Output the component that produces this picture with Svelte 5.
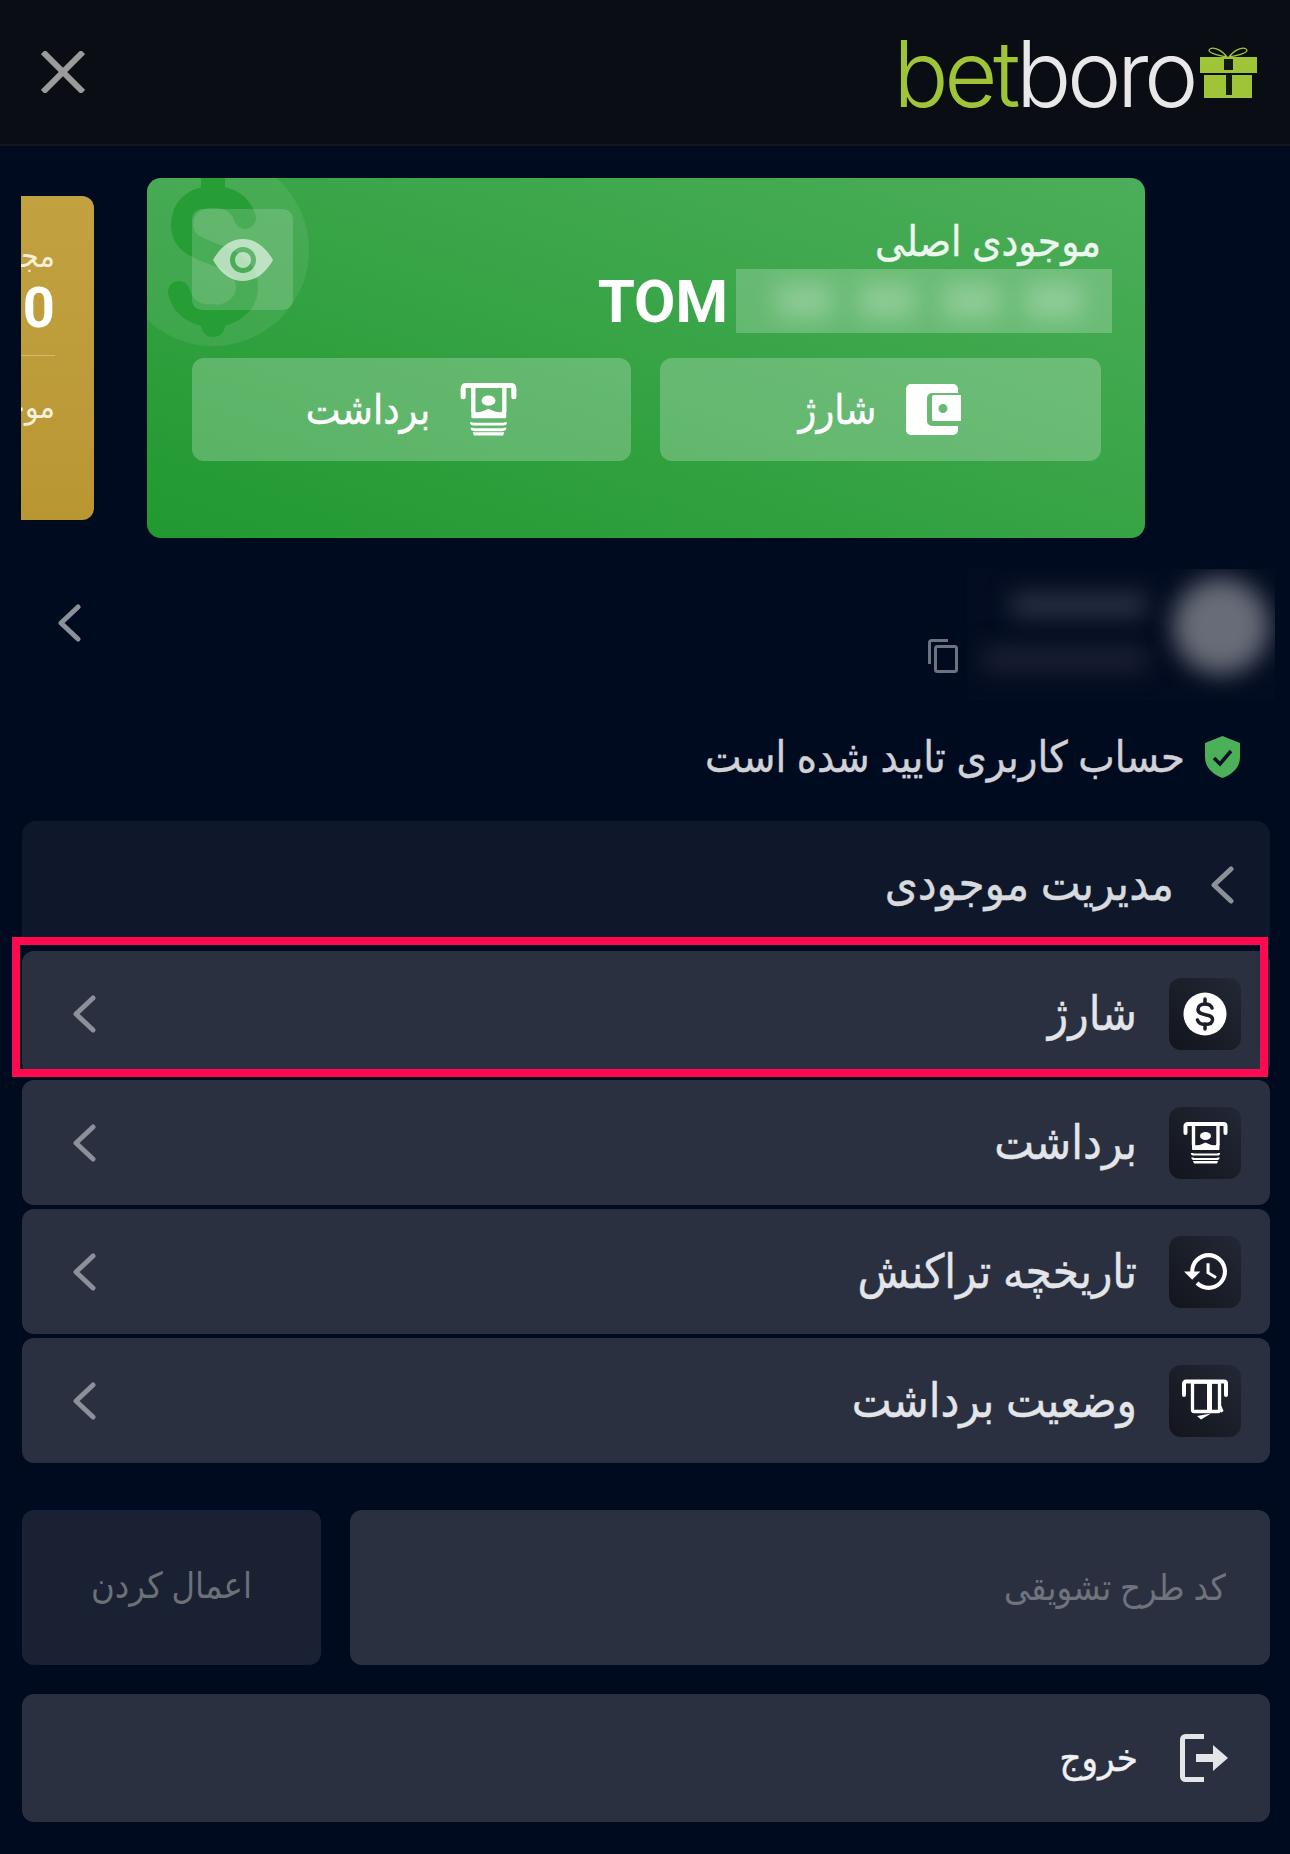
<script lang="ts">
const rows = [
	{ label: 'شارژ', icon: 'dollar' },
	{ label: 'برداشت', icon: 'atm' },
	{ label: 'تاریخچه تراکنش', icon: 'history' },
	{ label: 'وضعیت برداشت', icon: 'status' },
];
</script>

{#snippet atm()}
	<svg class="atm" viewBox="0 0 45 42" fill="none" stroke="#fff">
		<path d="M2.500 11V4a2 2 0 0 1 2-2h36a2 2 0 0 1 2 2v7" stroke-width="4" stroke-linecap="round" />
		<path d="M10.500 4v19M35 4v19" stroke-width="3.400" />
		<ellipse cx="22.500" cy="14" rx="5.500" ry="4" fill="#fff" stroke="none" />
		<path d="M9 22h3v1q4 1 10.500-2.500Q29 24 33 23v-1h3.500v5a1 1 0 0 1-1 1H10a1 1 0 0 1-1-1z" fill="#fff" stroke="none" />
		<path d="M9 31q0 1.500 2 1.500h23q2 0 2-1.500M9.500 35.500q0 1.500 2 1.500h22q2 0 2-1.500" stroke-width="2.200" />
		<path d="M10 39h25l-1 2.500H11z" fill="#fff" stroke="none" />
	</svg>
{/snippet}

{#snippet dollar()}
	<svg class="dollar" viewBox="0 0 44 44">
		<circle cx="22" cy="22" r="21.500" fill="#fff" />
		<path d="M29 16c-1-3-4-4-7-4-4 0-7 2-7 5.500 0 7.500 14.500 3 14.500 10 0 3.500-3.500 5-7.500 5-3.500 0-6.500-1.500-7.500-4.500" fill="none" stroke="#1b202c" stroke-width="3.500" stroke-linecap="round" />
		<path d="M22 7v5M22 32v5" stroke="#1b202c" stroke-width="3.500" stroke-linecap="round" />
	</svg>
{/snippet}

{#snippet history()}
	<svg class="history" viewBox="1 3 21 18" fill="#fff">
		<path d="M13 3c-4.970 0-9 4.030-9 9H1l3.890 3.890.070.140L9 12H6c0-3.870 3.130-7 7-7s7 3.130 7 7-3.130 7-7 7c-1.930 0-3.680-.790-4.940-2.060l-1.420 1.420C8.270 19.990 10.510 21 13 21c4.970 0 9-4.030 9-9s-4.030-9-9-9zm-1 5v5l4.280 2.540.720-1.210-3.500-2.080V8H12z" />
	</svg>
{/snippet}

{#snippet status()}
	<svg class="status" viewBox="0 0 48 43" fill="none" stroke="#fff">
		<path d="M3 16V4.500a2 2 0 0 1 2-2h38a2 2 0 0 1 2 2V16" stroke-width="4" stroke-linecap="round" />
		<rect x="11.500" y="3" width="27" height="29.500" rx="1.500" stroke-width="3.300" />
		<path d="M26 4h5v28h-5z" fill="#fff" stroke="none" />
		<path d="M40 26l2.500 6-2 1.500H40zM16 37l14-2.500-10 6z" fill="#fff" stroke="none" />
	</svg>
{/snippet}

<main dir="rtl">
	<header>
		<div class="logo">
			<svg class="gift" viewBox="0 0 56 52">
				<path d="M27 10C20 9 9 6 9 3.500 10-1 20 1 27 10zM29 10c7-1 18-4 18-6.500C46-1 36 1 29 10z" fill="none" stroke="#a0c438" stroke-width="1.300" />
				<path d="M0 10h57v16H0zM4 28h48v23H4z" fill="#a0c438" />
				<path d="M24 12h9v11h-9zM26 28h6v20h-6z" fill="#141a0e" />
			</svg>
			<span dir="ltr"><b>bet</b>boro</span>
		</div>
		<svg class="close" viewBox="0 0 44 42" fill="none" stroke="#9b9b9b" stroke-width="6">
			<path d="M2 1l40 40M42 1L2 41" />
		</svg>
	</header>

	<section class="carousel">
		<article class="card-green">
			<svg class="deco" viewBox="0 0 998 360">
				<circle cx="66" cy="72" r="96" fill="#fff" opacity=".08" />
				<path d="M98 40C94 26 82 19 66 19 46 19 35 31 35 47c0 36 65 22 65 62 0 18-16 29-34 29-17 0-30-8-34-24" fill="none" stroke="#279d36" stroke-width="22" stroke-linecap="round" />
				<path d="M66 -10v28M66 138v9" fill="none" stroke="#279d36" stroke-width="24" stroke-linecap="round" />
			</svg>
			<button class="eye" aria-label="show balance">
				<svg viewBox="0 0 60 42">
					<path fill-rule="evenodd" fill="#fff" opacity=".6" d="M0 21C8 7 18 0 30 0s22 7 30 21c-8 14-18 21-30 21S8 35 0 21zM30 8a13 13 0 1 0 0 26 13 13 0 0 0 0-26zM30 13a8 8 0 1 1 0 16 8 8 0 0 1 0-16z" />
				</svg>
			</button>
			<div class="label">موجودی اصلی</div>
			<div class="amount" dir="ltr">
				<span>TOM</span>
				<div class="hidden-value"><i></i><i></i><i></i><i></i></div>
			</div>
			<div class="actions">
				<button>
					<svg class="wallet" viewBox="0 0 56 51">
						<path fill="#fff" d="M5 0h42a5 5 0 0 1 5 5v4H26a5 5 0 0 0-5 5v23a5 5 0 0 0 5 5h26v4a5 5 0 0 1-5 5H5a5 5 0 0 1-5-5V5a5 5 0 0 1 5-5z" />
						<path fill="#fff" fill-rule="evenodd" d="M28 11h27v26H28a2 2 0 0 1-2-2V13a2 2 0 0 1 2-2zM37 20a4.500 4.500 0 1 0 0 9 4.500 4.500 0 0 0 0-9z" />
					</svg>
					شارژ
				</button>
				<button>{@render atm()} برداشت</button>
			</div>
		</article>
		<article class="card-gold">
			<div class="gold-title">مجموع موجودی</div>
			<div class="gold-value" dir="ltr">TOM 1,000</div>
			<hr />
			<div class="gold-sub">موجودی جایزه</div>
		</article>
	</section>

	<section class="user">
		<div class="user-blur">
			<div class="avatar"></div>
			<div class="lines"><i></i><i></i></div>
		</div>
		<svg class="copy" viewBox="0 0 30 34" fill="none" stroke="#6d7280" stroke-width="3">
			<path d="M1.500 25V3.500a2 2 0 0 1 2-2H20" />
			<rect x="7.500" y="7.500" width="21" height="25" rx="2" />
		</svg>
		<svg class="chevron user-chevron" viewBox="0 0 24 38"><path d="M21 3L4 19l17 16" /></svg>
	</section>

	<div class="verified">
		<svg viewBox="0 0 35 42">
			<path d="M17.500 0L35 7v14c0 10-7 17-17.500 21C7 38 0 31 0 21V7z" fill="#4caf5a" />
			<path d="M9 22l6 6 11-13" fill="none" stroke="#0a1224" stroke-width="3.500" />
		</svg>
		حساب کاربری تایید شده است
	</div>

	<div class="panel-head">
		<svg class="chevron" viewBox="0 0 24 38"><path d="M21 3L4 19l17 16" /></svg>
		<h2>مدیریت موجودی</h2>
	</div>

	<nav>
		<div class="highlight"></div>
		{#each rows as row}
			<a href="#{row.icon}" class="row">
				<span class="icon-box">
					{#if row.icon === 'dollar'}
						{@render dollar()}
					{:else if row.icon === 'atm'}
						{@render atm()}
					{:else if row.icon === 'history'}
						{@render history()}
					{:else}
						{@render status()}
					{/if}
				</span>
				<span class="row-label">{row.label}</span>
				<svg class="chevron" viewBox="0 0 24 38"><path d="M21 3L4 19l17 16" /></svg>
			</a>
		{/each}
	</nav>

	<form class="promo" onsubmit={(e) => e.preventDefault()}>
		<input type="text" placeholder="کد طرح تشویقی" />
		<button disabled>اعمال کردن</button>
	</form>

	<button class="logout">
		<svg viewBox="0 0 48 48">
			<path d="M24 2.500H5.500a3 3 0 0 0-3 3v37a3 3 0 0 0 3 3H24" fill="none" stroke="#e4e5e8" stroke-width="5" />
			<path d="M16 20h17v-9l15 13-15 13v-9H16z" fill="#e4e5e8" />
		</svg>
		خروج
	</button>
</main>

<style>
	:global(body) {
		background: #010b20;
	}

	main {
		width: 1290px;
		height: 1854px;
		overflow: hidden;
		font-family: Roboto, "DejaVu Sans Condensed", "DejaVu Sans", sans-serif;
		color: #d8dade;
	}

	button {
		font: inherit;
		border: none;
		cursor: pointer;
	}

	header {
		height: 144px;
		box-sizing: content-box;
		border-bottom: 2px solid #12161d;
		background: #0a0d14;
		display: flex;
		align-items: center;
		justify-content: space-between;
		padding: 0 34px 0 41px;
	}

	.close {
		width: 44px;
		height: 42px;
	}

	.logo {
		display: flex;
		align-items: center;
		gap: 6px;
	}

	.logo span {
		font-family: Inter, sans-serif;
		font-weight: 260;
		font-size: 92px;
		letter-spacing: -4.500px;
		line-height: 1;
		color: #e8e8e8;
		margin-top: 4px;
	}

	.logo b {
		font-weight: 260;
		color: #a0c438;
	}

	.gift {
		width: 56px;
		height: 52px;
		margin-top: 2px;
		overflow: visible;
	}

	.carousel {
		display: flex;
		align-items: center;
		gap: 53px;
		margin: 32px 20px 0 21px;
		padding-right: 125px;
		overflow: hidden;
	}

	.card-green {
		position: relative;
		flex: 0 0 998px;
		height: 360px;
		box-sizing: border-box;
		padding: 38px 44px 0 44px;
		border-radius: 14px;
		overflow: hidden;
		background: linear-gradient(to top right, #219930, #4cae5a);
		display: flex;
		flex-direction: column;
	}

	.deco {
		position: absolute;
		inset: 0;
		width: 100%;
		height: 100%;
		pointer-events: none;
	}

	.eye {
		position: absolute;
		left: 45px;
		top: 31px;
		width: 101px;
		height: 101px;
		padding: 0;
		border-radius: 10px;
		background: rgba(255, 255, 255, 0.16);
		display: flex;
		align-items: center;
		justify-content: center;
	}

	.eye svg {
		width: 60px;
		height: 42px;
	}

	.label {
		position: relative;
		font-size: 42px;
		line-height: 52px;
		color: #edf6ee;
		-webkit-text-stroke: 0.4px #edf6ee;
	}

	.amount {
		position: relative;
		display: flex;
		align-items: center;
		justify-content: flex-end;
		gap: 8px;
		margin-right: -11px;
		height: 64px;
		margin-top: 1px;
	}

	.amount span {
		font-size: 60px;
		font-weight: 700;
		color: #fff;
	}

	.hidden-value {
		width: 376px;
		height: 64px;
		overflow: hidden;
		display: flex;
		align-items: center;
		justify-content: space-between;
		padding: 0 30px 0 40px;
		box-sizing: border-box;
		background: rgba(255, 255, 255, 0.22);
	}

	.hidden-value i {
		display: block;
		height: 34px;
		width: 56px;
		background: rgba(255, 255, 255, 0.26);
		filter: blur(12px);
	}

	.actions {
		position: relative;
		display: grid;
		grid-template-columns: 441px 439px;
		gap: 29px;
		margin: 25px 0 0 0;
	}

	.actions button {
		height: 103px;
		border-radius: 12px;
		background: rgba(255, 255, 255, 0.24);
		color: #fff;
		font-size: 41px;
		-webkit-text-stroke: 0.4px #fff;
		display: flex;
		align-items: center;
		justify-content: center;
		gap: 30px;
	}

	.wallet {
		width: 56px;
		height: 51px;
	}

	.actions .atm {
		width: 57px;
		height: 55px;
	}

	.card-gold {
		flex: 0 0 900px;
		height: 324px;
		box-sizing: border-box;
		padding: 38px 39px 0 0;
		border-radius: 12px;
		background: linear-gradient(to bottom, #c2a141, #b89733);
		color: #fff;
	}

	.gold-title {
		font-size: 32px;
		line-height: 44px;
		color: #f7efd8;
	}

	.gold-value {
		font-size: 56px;
		font-weight: 700;
		line-height: 68px;
		text-align: right;
		margin-top: -4px;
	}

	.card-gold hr {
		border: none;
		height: 1px;
		background: rgba(255, 255, 255, 0.3);
		margin: 13px 0 0 0;
	}

	.gold-sub {
		font-size: 32px;
		line-height: 44px;
		margin-top: 29px;
		color: #f7efd8;
	}

	.user {
		display: flex;
		align-items: flex-start;
		height: 131px;
		margin-top: 31px;
		padding: 0 15px 0 0;
	}

	.user-blur {
		flex: 0 0 308px;
		height: 131px;
		display: flex;
		align-items: center;
		gap: 26px;
		overflow: hidden;
		background: #030c20;
	}

	.avatar {
		flex: none;
		width: 96px;
		height: 96px;
		margin: -18px 6px 0 0;
		border-radius: 50%;
		background: #686c78;
		filter: blur(12px);
	}

	.lines {
		display: flex;
		flex-direction: column;
		gap: 32px;
		flex: 1;
		margin-top: -6px;
	}

	.lines i {
		display: block;
		height: 22px;
		background: #30364a;
		filter: blur(12px);
		width: 136px;
	}

	.lines i:last-child {
		background: #1f2436;
		width: 165px;
	}

	.copy {
		width: 30px;
		height: 34px;
		margin: 70px 9px 0 0;
	}

	.chevron {
		width: 24px;
		height: 38px;
		fill: none;
		stroke: #8c9098;
		stroke-width: 5;
		stroke-linecap: round;
		stroke-linejoin: round;
		flex: none;
	}

	.user-chevron {
		margin: 35px auto 0 57px;
	}

	.verified {
		display: flex;
		align-items: center;
		gap: 20px;
		height: 42px;
		margin: 36px 50px 0 0;
		font-size: 43px;
		color: #d0d2d8;
		-webkit-text-stroke: 0.4px #d0d2d8;
	}

	.verified svg {
		width: 35px;
		height: 42px;
		flex: none;
	}

	.panel-head {
		display: flex;
		align-items: center;
		gap: 36px;
		height: 124px;
		margin: 43px 20px 0 22px;
		padding: 4px 36px 0 0;
		box-sizing: border-box;
		border-radius: 14px 14px 0 0;
		background: #0f182b;
	}

	.panel-head h2 {
		margin: 0 0 4px;
		font-size: 47px;
		font-weight: 400;
		color: #d8dade;
		-webkit-text-stroke: 0.4px #d8dade;
	}

	nav {
		position: relative;
		display: flex;
		flex-direction: column;
		gap: 4px;
		margin: 6px 20px 0 22px;
	}

	.highlight {
		position: absolute;
		left: -10px;
		right: 2px;
		top: -14px;
		height: 140px;
		box-sizing: border-box;
		border: 8px solid #ff0a50;
		z-index: 2;
		pointer-events: none;
	}

	.row {
		display: flex;
		align-items: center;
		gap: 32px;
		height: 125px;
		padding: 0 29px 0 50px;
		border-radius: 12px;
		background: #2a3040;
		color: #e4e5e8;
		text-decoration: none;
		font-size: 47px;
		-webkit-text-stroke: 0.4px #e4e5e8;
	}

	.icon-box {
		flex: none;
		width: 72px;
		height: 72px;
		border-radius: 12px;
		background: linear-gradient(to top right, #12151c, #232836);
		display: flex;
		align-items: center;
		justify-content: center;
	}

	.row-label {
		flex: 1;
	}

	.dollar {
		width: 44px;
		height: 44px;
	}

	.icon-box .atm {
		width: 45px;
		height: 42px;
	}

	.history {
		width: 43px;
		height: 37px;
	}

	.icon-box .status {
		width: 48px;
		height: 43px;
	}

	.promo {
		display: flex;
		gap: 29px;
		margin: 47px 20px 0 22px;
		height: 155px;
	}

	.promo input {
		flex: 1;
		min-width: 0;
		border: none;
		outline: none;
		border-radius: 12px;
		background: #2a3040;
		padding: 0 44px 0 44px;
		font: inherit;
		font-size: 36px;
		color: #fff;
	}

	.promo input::placeholder {
		color: #6f737c;
	}

	.promo button {
		flex: 0 0 299px;
		border-radius: 12px;
		background: #1a2132;
		color: #6c7079;
		font-size: 36px;
		padding-bottom: 4px;
	}

	.logout {
		display: flex;
		align-items: center;
		gap: 42px;
		width: 1248px;
		height: 128px;
		margin: 29px 20px 0 0;
		padding: 0 42px;
		border-radius: 12px;
		background: #2a3040;
		color: #f0f1f3;
		font-size: 38px;
		-webkit-text-stroke: 0.4px #f0f1f3;
	}

	.logout svg {
		width: 48px;
		height: 48px;
		flex: none;
	}
</style>
